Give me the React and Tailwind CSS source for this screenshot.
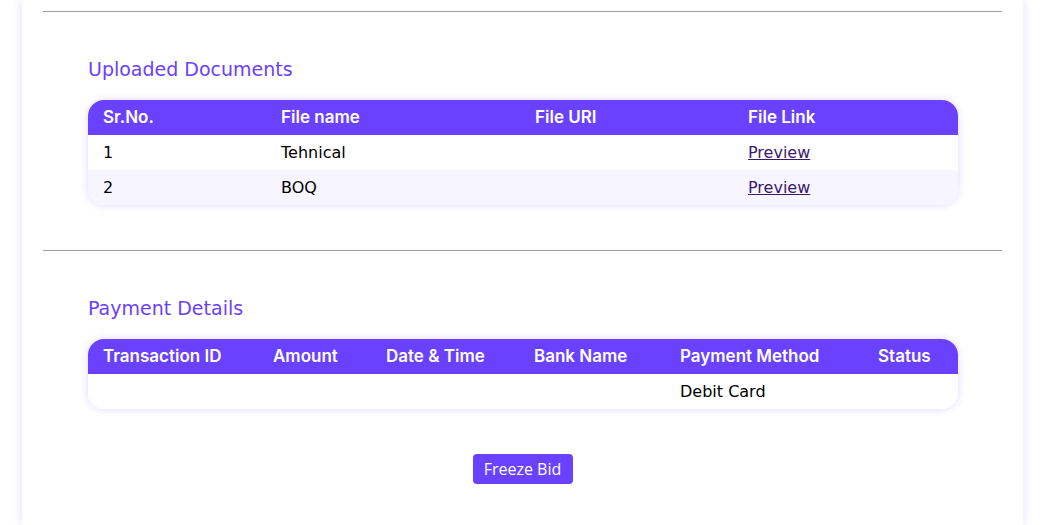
import React from "react";

const docs = [
  { sr: "1", name: "Tehnical", uri: "" },
  { sr: "2", name: "BOQ", uri: "" },
];

const payments = [
  { id: "", amount: "", date: "", bank: "", method: "Debit Card", status: "" },
];

const headFont = { fontFamily: 'Inter, "Noto Sans", sans-serif' };

function SectionTitle({ children }) {
  return (
    <h2 className="text-[19px] leading-[24px] text-[#6941ff] ml-[45px]">
      {children}
    </h2>
  );
}

function Th({ className = "", children }) {
  return (
    <th
      className={`pl-[15px] text-[17px] font-semibold ${className}`}
      style={headFont}
    >
      {children}
    </th>
  );
}

export default function App() {
  return (
    <div
      className="min-h-[525px] bg-white overflow-hidden"
      style={{ fontFamily: '"DejaVu Sans", "Noto Sans", sans-serif' }}
    >
      <div className="ml-[22px] w-[1001px] min-h-[525px] bg-white shadow-[0_0_10px_rgba(105,65,255,0.18)] px-[21px] pt-[11px] pb-[41px]">
        <hr className="border-0 border-t border-[#9e9e9e]" />

        {/* Documents */}
        <div className="mt-[45px]">
          <SectionTitle>Uploaded Documents</SectionTitle>
          <div className="mt-[19px] ml-[45px] w-[870px] rounded-2xl overflow-hidden shadow-[0_0_8px_rgba(105,65,255,0.2)]">
            <table className="w-full text-[16px] text-left">
              <thead>
                <tr className="bg-[#6941ff] text-white h-[35px]">
                  <Th className="w-[178px]">Sr.No.</Th>
                  <Th className="w-[254px]">File name</Th>
                  <Th className="w-[213px]">File URI</Th>
                  <Th>File Link</Th>
                </tr>
              </thead>
              <tbody className="text-black">
                {docs.map((d, i) => (
                  <tr
                    key={d.sr}
                    className={`h-[35px] ${i % 2 ? "bg-[#f7f5ff]" : "bg-white"}`}
                  >
                    <td className="pl-[15px]">{d.sr}</td>
                    <td className="pl-[15px]">{d.name}</td>
                    <td className="pl-[15px]">{d.uri}</td>
                    <td className="pl-[15px]">
                      <a href="#" className="underline text-[#3b1a6e]">
                        Preview
                      </a>
                    </td>
                  </tr>
                ))}
              </tbody>
            </table>
          </div>
        </div>

        <hr className="mt-[45px] border-0 border-t border-[#9e9e9e]" />

        {/* Payment */}
        <div className="mt-[45px]">
          <SectionTitle>Payment Details</SectionTitle>
          <div className="mt-[19px] ml-[45px] w-[870px] rounded-2xl overflow-hidden shadow-[0_0_8px_rgba(105,65,255,0.2)]">
            <table className="w-full text-[16px] text-left">
              <thead>
                <tr className="bg-[#6941ff] text-white h-[35px]">
                  <Th className="w-[170px]">Transaction ID</Th>
                  <Th className="w-[113px]">Amount</Th>
                  <Th className="w-[148px]">Date &amp; Time</Th>
                  <Th className="w-[146px]">Bank Name</Th>
                  <Th className="w-[198px]">Payment Method</Th>
                  <Th>Status</Th>
                </tr>
              </thead>
              <tbody className="text-black">
                {payments.map((p, i) => (
                  <tr key={i} className="h-[35px] bg-white">
                    <td className="pl-[15px]">{p.id}</td>
                    <td className="pl-[15px]">{p.amount}</td>
                    <td className="pl-[15px]">{p.date}</td>
                    <td className="pl-[15px]">{p.bank}</td>
                    <td className="pl-[15px]">{p.method}</td>
                    <td className="pl-[15px]">{p.status}</td>
                  </tr>
                ))}
              </tbody>
            </table>
          </div>
        </div>

        <div className="mt-[45px] flex justify-center">
          <button
            className="w-[100px] h-[30px] rounded bg-[#6941ff] text-white text-[16px]"
            style={{ fontFamily: '"Open Sans", sans-serif' }}
          >
            Freeze Bid
          </button>
        </div>
      </div>
    </div>
  );
}
